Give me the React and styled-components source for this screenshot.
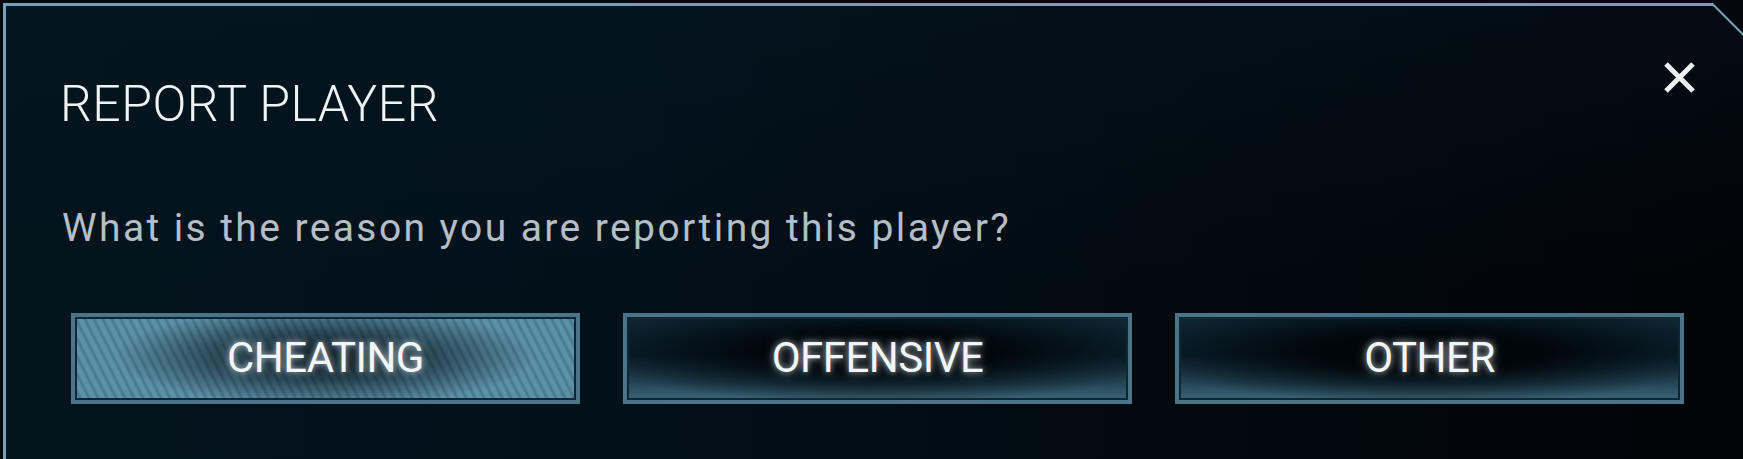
import React from 'react'
import styled, { createGlobalStyle } from 'styled-components'

const Global = createGlobalStyle`
html, body {
    margin: 0;
    padding: 0;
    background: #04080c;
    overflow: hidden;
}
#root {
    width: 1743px;
    height: 459px;
    padding: 3px 0 0 3px;
    box-sizing: border-box;
}
`

const cut = `polygon(0 0, calc(100% - 47px) 0, 100% 47px, 100% 100%, 0 100%)`

const Frame = styled.div`
width: 1757px;
height: 470px;
background: #72a2ba;
padding: 3px 0 0 3px;
box-sizing: border-box;
clip-path: ${cut};
`

const Panel = styled.div`
height: 100%;
box-sizing: border-box;
clip-path: ${cut};
background:
    linear-gradient(180deg, rgba(6, 26, 38, 0.35) 0%, rgba(0, 0, 0, 0) 60%),
    linear-gradient(90deg, #03131c 0%, #02101a 35%, #020a10 65%, #020307 100%);
padding: 55px 64px 0 54px;
display: flex;
flex-direction: column;
font-family: Roboto, "Liberation Sans", sans-serif;
`

const Header = styled.div`
display: flex;
justify-content: space-between;
align-items: flex-start;
`

const Title = styled.h1`
margin: 18px 0 0 0;
font-size: 50px;
line-height: 50px;
font-weight: 300;
color: #eef3f6;
letter-spacing: 0.5px;
`

const Close = styled.button`
width: 33px;
height: 33px;
padding: 0;
border: none;
background: none;
cursor: pointer;
display: flex;
svg { display: block; }
`

const Question = styled.p`
margin: 80px 0 0 2px;
font-size: 39px;
line-height: 39px;
font-weight: 400;
color: #b3bec6;
letter-spacing: 2.4px;
`

const Buttons = styled.div`
display: flex;
gap: 43px;
margin: 65px 0 0 11px;
`

const plainFill = `
    radial-gradient(ellipse 62% 62% at 50% 42%, rgba(0, 6, 10, 1) 35%, rgba(0, 6, 10, 0) 100%),
    linear-gradient(180deg, #0f2835 0%, #0c2230 45%, #244758 80%, #3c6679 100%)
`

const stripeFill = `
    radial-gradient(ellipse 42% 60% at 50% 48%, rgba(0, 10, 16, 0.85) 20%, rgba(0, 10, 16, 0) 100%),
    repeating-linear-gradient(63deg, #5e91a8 0px, #5e91a8 3px, #4a7a91 5px, #4a7a91 6px, #5e91a8 8px)
`

const ReasonButton = styled.button`
width: 509px;
height: 91px;
box-sizing: border-box;
border: 4px solid #4b7489;
box-shadow: inset 0 0 0 2px #0e2736;
background: ${(p) => (p.active ? stripeFill : plainFill)};
display: flex;
justify-content: center;
align-items: center;
padding: 0 0 2px 0;
font-family: Roboto, "Liberation Sans", sans-serif;
font-size: 42px;
font-weight: 400;
letter-spacing: -0.5px;
color: #f2f6f8;
text-shadow: 0 0 6px rgba(255, 255, 255, 0.65), 0 0 14px rgba(190, 225, 245, 0.35);
cursor: pointer;
`

const App = () => {
    return (
        <>
            <Global />
            <Frame>
                <Panel>
                    <Header>
                        <Title>REPORT PLAYER</Title>
                        <Close aria-label="close">
                            <svg width="33" height="33" viewBox="0 0 33 33">
                                <path d="M3 3 L30 30 M30 3 L3 30" stroke="#eceff1" strokeWidth="5" />
                            </svg>
                        </Close>
                    </Header>
                    <Question>What is the reason you are reporting this player?</Question>
                    <Buttons>
                        <ReasonButton active>CHEATING</ReasonButton>
                        <ReasonButton>OFFENSIVE</ReasonButton>
                        <ReasonButton>OTHER</ReasonButton>
                    </Buttons>
                </Panel>
            </Frame>
        </>
    )
}

export default App
